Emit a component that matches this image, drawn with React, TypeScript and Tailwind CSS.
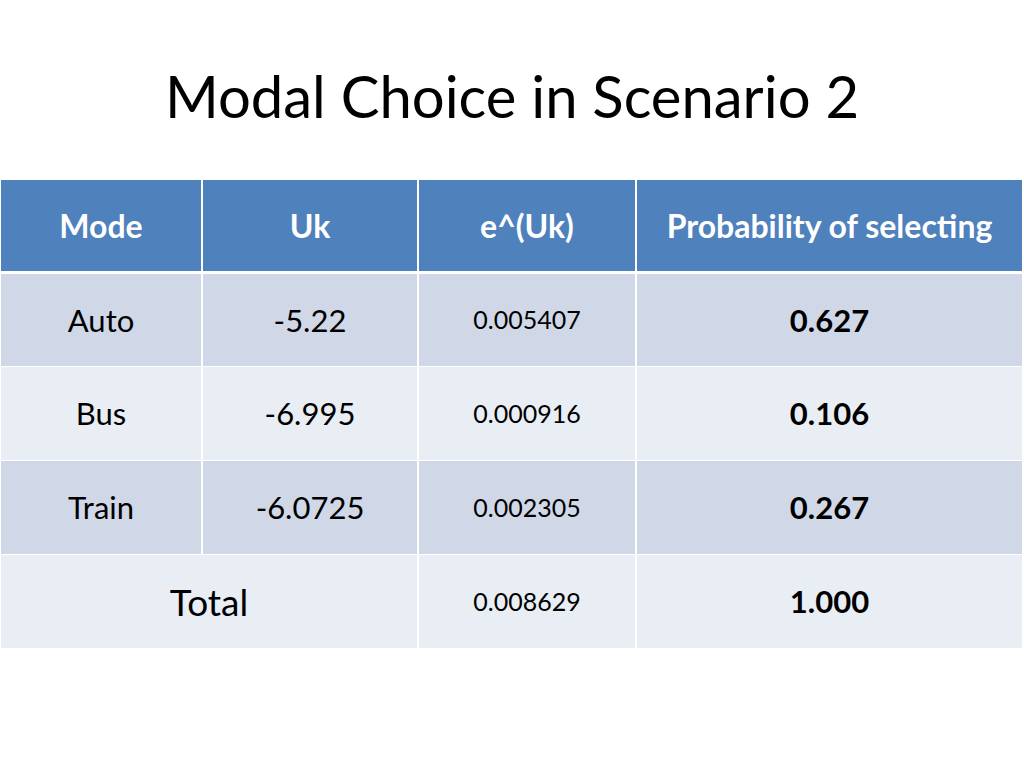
const rows = [
  { mode: 'Auto', uk: '-5.22', exp: '0.005407', prob: '0.627', h: 'h-[92px]' },
  { mode: 'Bus', uk: '-6.995', exp: '0.000916', prob: '0.106', h: 'h-[93px]' },
  { mode: 'Train', uk: '-6.0725', exp: '0.002305', prob: '0.267', h: 'h-[93px]' },
]

export default function App() {
  const font = { fontFamily: 'Lato, "Open Sans", sans-serif' }
  return (
    <div className="w-[1024px] h-[768px] bg-white overflow-hidden" style={font}>
      {/* Title */}
      <h1 className="h-[180px] pt-[61px] text-center text-[58px] leading-[70px] text-black">
        Modal Choice in Scenario 2
      </h1>

      {/* Header row */}
      <div className="ml-[1px] w-[1021px] grid grid-cols-[200px_214px_216px_385px] gap-x-[2px]">
        {['Mode', 'Uk', 'e^(Uk)', 'Probability of selecting'].map((h) => (
          <div
            key={h}
            className="h-[91px] bg-[#4f81bd] flex items-center justify-center text-white font-bold text-[32px]"
          >
            {h}
          </div>
        ))}
      </div>

      {/* Body */}
      <div className="ml-[1px] mt-[3px] w-[1021px] grid grid-cols-[200px_214px_216px_385px] gap-x-[2px] gap-y-[1px]">
        {rows.map((r, i) => {
          const bg = i % 2 === 0 ? 'bg-[#d0d8e8]' : 'bg-[#e9edf4]'
          return (
            <div key={r.mode} className="contents">
              <div className={`${bg} ${r.h} flex items-center justify-center text-[31px] text-black`}>
                {r.mode}
              </div>
              <div className={`${bg} ${r.h} flex items-center justify-center text-[31px] text-black`}>
                {r.uk}
              </div>
              <div className={`${bg} ${r.h} flex items-center justify-center text-[25px] text-black`}>
                {r.exp}
              </div>
              <div className={`${bg} ${r.h} flex items-center justify-center text-[31px] font-bold text-black`}>
                {r.prob}
              </div>
            </div>
          )
        })}
        <div className="col-span-2 bg-[#e9edf4] h-[93px] flex items-center justify-center text-[37px] text-black">
          Total
        </div>
        <div className="bg-[#e9edf4] h-[93px] flex items-center justify-center text-[25px] text-black">
          0.008629
        </div>
        <div className="bg-[#e9edf4] h-[93px] flex items-center justify-center text-[31px] font-bold text-black">
          1.000
        </div>
      </div>
    </div>
  )
}
